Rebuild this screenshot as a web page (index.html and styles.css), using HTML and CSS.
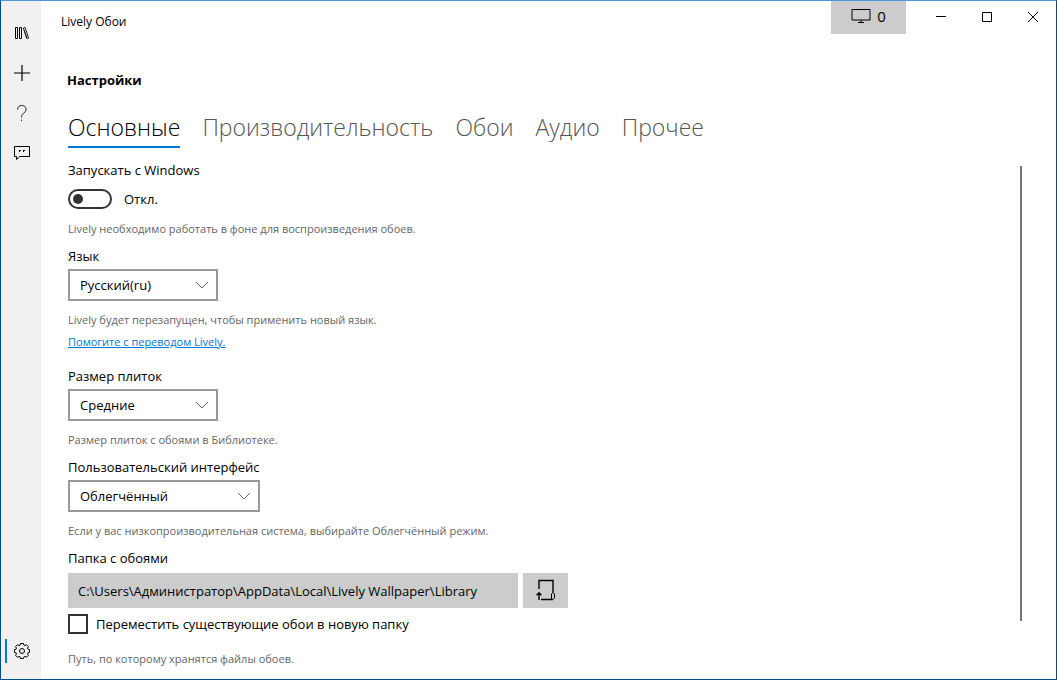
FILE: index.html
```html
<!DOCTYPE html>
<html lang="ru">
<head>
<meta charset="utf-8">
<meta name="viewport" content="width=device-width, initial-scale=1">
<title>Lively Обои</title>
<link rel="stylesheet" href="styles.css">
</head>
<body>
<div class="window">
  <nav class="sidebar" aria-label="Навигация">
    <button class="nav-item" type="button" aria-label="Библиотека">
      <svg width="16" height="16" viewBox="0 0 16 16"><path d="M1.500 2.500h2v11h-2zM5.500 2.500h2v11h-2z"/><path class="thin" d="M9.300 3l1.800-.6 3.500 10.700-1.800.6zM10.200 4.800l2.700 8.200"/></svg>
    </button>
    <button class="nav-item" type="button" aria-label="Добавить">
      <svg width="16" height="16" viewBox="0 0 16 16"><path class="plus" d="M8 0v16M0 8h16"/></svg>
    </button>
    <button class="nav-item" type="button" aria-label="Справка">
      <svg width="16" height="16" viewBox="0 0 16 16"><path class="thin" d="M3.500 4.500C3.500 2 5.200.5 7.700.5c2.600 0 4.500 1.500 4.500 4 0 3.300-4.700 3.700-4.700 7.200v.8M7.500 14.500v1.500"/></svg>
    </button>
    <button class="nav-item" type="button" aria-label="Отзыв">
      <svg width="16" height="16" viewBox="0 0 16 16"><path d="M.5 1.500h15v10H5.800L2.500 14.500v-3h-2z"/><path d="M5.500 5v2M6.500 5v1M9.500 5v2M10.500 5v1"/></svg>
    </button>
    <button class="nav-item nav-settings" type="button" aria-label="Настройки" aria-current="page">
      <svg width="16" height="16" viewBox="-8 -8 16 16"><path d="M-1.500-7.500h3l.4 1.700 1 .4 1.600-.9 1.900 1.900-.9 1.600.4 1 1.700.4v2.800l-1.700.4-.4 1 .9 1.600-1.900 1.900-1.600-.9-1 .4-.4 1.700h-3l-.4-1.700-1-.4-1.600.9-1.900-1.900.9-1.600-.4-1-1.700-.4v-2.800l1.700-.4.4-1-.9-1.600 1.900-1.900 1.600.9 1-.4z"/><circle r="2.500"/></svg>
    </button>
  </nav>

  <div class="workspace">
    <header class="titlebar">
      <span class="app-title">Lively Обои</span>
      <button class="displays" type="button" aria-label="Активные обои: 0">
        <svg width="20" height="16" viewBox="0 0 20 16"><path d="M1 1.500h18v10.500H1zM10 12v2.500M7 14.500h6"/></svg>
        <span>0</span>
      </button>
      <div class="caption-buttons">
        <button type="button" aria-label="Свернуть"><svg width="12" height="12" viewBox="0 0 12 12"><path d="M1 5.500h10"/></svg></button>
        <button type="button" aria-label="Развернуть"><svg width="12" height="12" viewBox="0 0 12 12"><path d="M1.500 1.500h9v9h-9z"/></svg></button>
        <button type="button" aria-label="Закрыть"><svg width="12" height="12" viewBox="0 0 12 12"><path d="M1 1l10 10M11 1L1 11"/></svg></button>
      </div>
    </header>

    <main class="page">
      <h1>Настройки</h1>
      <div class="tabs" role="tablist">
        <button class="tab" type="button" role="tab" aria-selected="true">Основные</button>
        <button class="tab" type="button" role="tab" aria-selected="false">Производительность</button>
        <button class="tab" type="button" role="tab" aria-selected="false">Обои</button>
        <button class="tab" type="button" role="tab" aria-selected="false">Аудио</button>
        <button class="tab" type="button" role="tab" aria-selected="false">Прочее</button>
      </div>

      <div class="panel">
        <form class="settings">
          <section class="group">
            <label class="label" for="startup">Запускать с Windows</label>
            <div class="toggle-row">
              <input class="toggle" id="startup" type="checkbox" role="switch">
              <span>Откл.</span>
            </div>
            <p class="hint">Lively необходимо работать в фоне для воспроизведения обоев.</p>
          </section>

          <section class="group group-language">
            <label class="label" for="language">Язык</label>
            <div class="select">
              <select id="language"><option>Русский(ru)</option></select>
              <svg class="chevron" width="14" height="8" viewBox="0 0 14 8"><path d="M1 1l6 6 6-6"/></svg>
            </div>
            <p class="hint">Lively будет перезапущен, чтобы применить новый язык.</p>
            <a class="link" href="#">Помогите с переводом Lively.</a>
          </section>

          <section class="group">
            <label class="label" for="tile-size">Размер плиток</label>
            <div class="select">
              <select id="tile-size"><option>Средние</option></select>
              <svg class="chevron" width="14" height="8" viewBox="0 0 14 8"><path d="M1 1l6 6 6-6"/></svg>
            </div>
            <p class="hint">Размер плиток с обоями в Библиотеке.</p>
          </section>

          <section class="group">
            <label class="label" for="interface">Пользовательский интерфейс</label>
            <div class="select select-wide">
              <select id="interface"><option>Облегчённый</option></select>
              <svg class="chevron" width="14" height="8" viewBox="0 0 14 8"><path d="M1 1l6 6 6-6"/></svg>
            </div>
            <p class="hint">Если у вас низкопроизводительная система, выбирайте Облегчённый режим.</p>
          </section>

          <section class="group group-folder">
            <label class="label" for="folder">Папка с обоями</label>
            <div class="folder-row">
              <input class="path" id="folder" type="text" readonly value="C:\Users\Администратор\AppData\Local\Lively Wallpaper\Library">
              <button class="browse" type="button" aria-label="Выбрать папку">
                <svg width="20" height="22" viewBox="0 0 20 22"><path class="heavy" d="M3 10V1.500h14v12M5 20.500h12M3 21v-7M.6 16.200L3 13.800l2.400 2.400"/><path d="M15.500 20.500v-5.500l1.500-1.500 1.500 1.500v4l-1.500 1.500"/></svg>
              </button>
            </div>
            <label class="check-row"><input class="check" type="checkbox"><span>Переместить существующие обои в новую папку</span></label>
            <p class="hint">Путь, по которому хранятся файлы обоев.</p>
          </section>
        </form>
        <div class="scroll-track" aria-hidden="true"><div class="scroll-thumb"></div></div>
      </div>
    </main>
  </div>
</div>
</body>
</html>
```
FILE: styles.css
```css
* { box-sizing: border-box; }

body {
  margin: 0;
  background: #fff;
  color: #000;
  font: 13px/20px "Segoe UI", "Open Sans", "Noto Sans", sans-serif;
}

button, input, select { font: inherit; color: inherit; }

button {
  padding: 0;
  border: 0;
  border-radius: 0;
  background: none;
}

svg {
  display: block;
  fill: none;
  stroke: #000;
  stroke-width: 1;
}

.window {
  display: flex;
  min-height: 100vh;
  border: 1px solid #004e8c;
  border-top-color: #4a97de;
}

.sidebar {
  display: flex;
  flex: none;
  flex-direction: column;
  width: 40px;
  padding: 12px 0 8px;
  background: #f1f1f1;
}

.nav-item {
  display: grid;
  place-items: center;
  width: 40px;
  height: 40px;
  padding-left: 2px;
}

.nav-item .thin { stroke: #222; }

.nav-item .plus { stroke-width: 1.2; }

.nav-settings {
  position: relative;
  margin-top: auto;
}

.nav-settings::before {
  content: "";
  position: absolute;
  top: 8px;
  left: 4px;
  width: 2px;
  height: 24px;
  background: #0078d7;
}

.workspace {
  display: flex;
  flex: 1;
  flex-direction: column;
  min-width: 0;
}

.titlebar {
  display: flex;
  align-items: flex-start;
  height: 33px;
}

.app-title {
  flex: 1;
  padding: 11px 20px 0;
  font-size: 12px;
}

.displays {
  display: flex;
  align-items: center;
  justify-content: center;
  gap: 6px;
  width: 75px;
  height: 33px;
  padding-bottom: 3px;
  background: #ccc;
  font-size: 15px;
}

.caption-buttons {
  display: flex;
  margin: 0 0 0 12px;
}

.caption-buttons button {
  display: grid;
  place-items: center;
  width: 46px;
  height: 32px;
}

.page {
  display: flex;
  flex: 1;
  flex-direction: column;
  padding: 36px 34px 0 27px;
}

h1 {
  margin: 0 0 24px -1px;
  font-size: 13px;
  line-height: 20px;
  font-weight: 700;
}

.tabs {
  display: flex;
  gap: 22px;
  margin-bottom: 12px;
}

.tab {
  height: 34px;
  padding-bottom: 6px;
  border-bottom: 2px solid transparent;
  color: #555;
  font-size: 23px;
  font-weight: 300;
  line-height: 26px;
}

.tab[aria-selected="true"] {
  border-color: #0078d7;
  color: #000;
}

.panel {
  display: flex;
  flex: 1;
}

.settings { flex: 1; }

.group {
  display: flex;
  flex-direction: column;
  align-items: flex-start;
  margin-bottom: 9px;
}

.group-language { margin-bottom: 16px; }

.group-folder { margin-bottom: 0; }

.toggle-row {
  display: flex;
  align-items: center;
  gap: 12px;
  margin: 9px 0 1px;
}

.toggle {
  display: flex;
  align-items: center;
  appearance: none;
  width: 44px;
  height: 20px;
  margin: 0;
  padding: 0 3px;
  border: 2px solid #333;
  border-radius: 10px;
}

.toggle::before {
  content: "";
  width: 10px;
  height: 10px;
  border-radius: 50%;
  background: #333;
}

.hint {
  margin: 11px 0 0;
  color: #666;
  font-size: 11px;
  line-height: 16px;
}

.link {
  margin-top: 6px;
  color: #0078d7;
  font-size: 11px;
  line-height: 16px;
}

.select {
  position: relative;
  width: 150px;
  margin-top: 3px;
}

.select-wide { width: 192px; }

.select select {
  display: block;
  appearance: none;
  width: 100%;
  height: 32px;
  padding: 0 32px 0 10px;
  border: 2px solid #999;
  border-radius: 0;
  background: #fff;
}

.chevron {
  position: absolute;
  top: 12px;
  right: 9px;
  stroke: #666;
  pointer-events: none;
}

.folder-row {
  display: flex;
  gap: 5px;
  width: 100%;
  max-width: 500px;
  margin-top: 5px;
}

.path {
  flex: 1;
  min-width: 0;
  height: 35px;
  padding: 0 10px;
  border: 0;
  border-radius: 0;
  background: #ccc;
}

.browse {
  display: grid;
  place-items: center;
  width: 45px;
  height: 35px;
  padding-bottom: 2px;
  background: #ccc;
}

.browse .heavy { stroke-width: 1.4; }

.check-row {
  display: flex;
  align-items: center;
  gap: 8px;
  margin-top: 6px;
}

.check {
  appearance: none;
  width: 20px;
  height: 20px;
  margin: 0;
  border: 2px solid #333;
}

.group-folder .hint { margin-top: 17px; }

.scroll-track {
  width: 2px;
  padding: 6px 0 58px;
}

.scroll-thumb {
  height: 100%;
  background: #767676;
}
```
